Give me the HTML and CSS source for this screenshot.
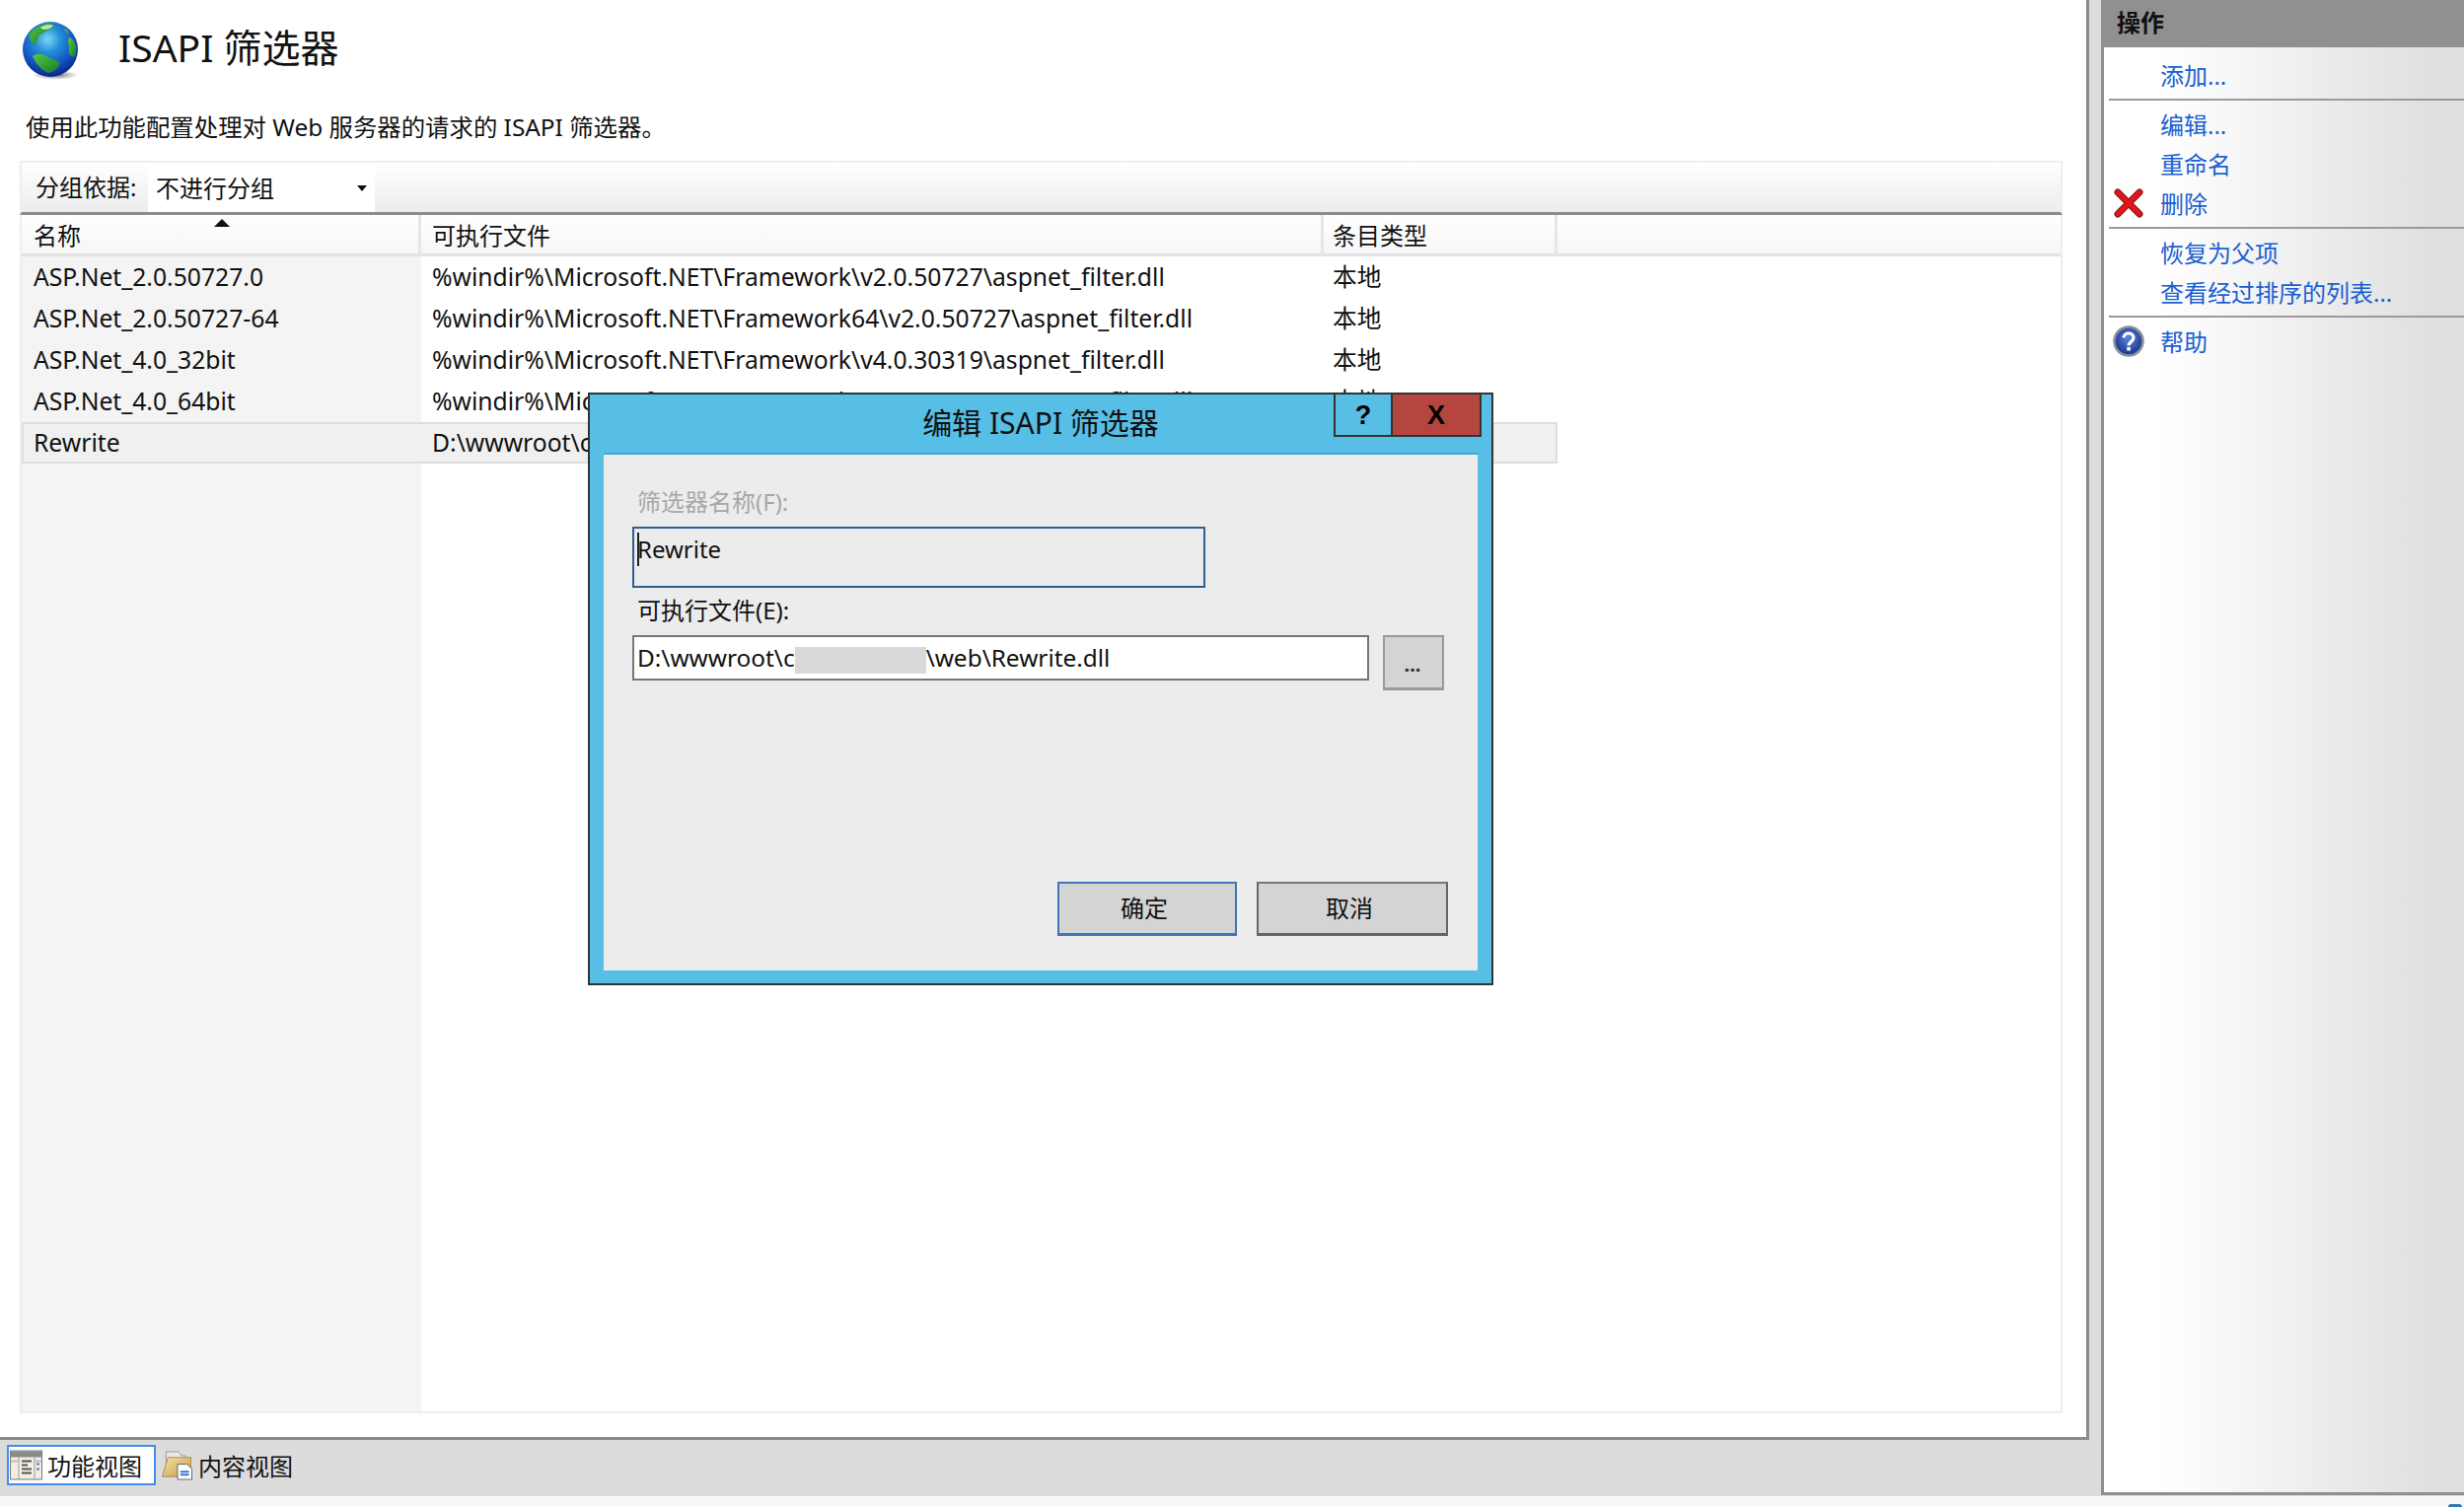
FILE: index.html
```html
<!DOCTYPE html>
<html lang="zh-CN">
<head>
<meta charset="utf-8">
<title>ISAPI 筛选器</title>
<link rel="stylesheet" href="styles.css">
</head>
<body>
<div class="app">
  <div class="top">
    <div class="left">
      <main class="main">
        <header class="title-row">
          <svg class="globe" viewBox="0 0 60 60" aria-hidden="true">
            <defs>
              <radialGradient id="sea" cx="0.45" cy="0.32" r="0.66">
                <stop offset="0" stop-color="#7fd6f4"/>
                <stop offset="0.35" stop-color="#2490da"/>
                <stop offset="0.75" stop-color="#1450c0"/>
                <stop offset="1" stop-color="#0a2a90"/>
              </radialGradient>
              <radialGradient id="shadow" cx="0.5" cy="0.5" r="0.5">
                <stop offset="0" stop-color="#444" stop-opacity="0.9"/>
                <stop offset="1" stop-color="#888" stop-opacity="0"/>
              </radialGradient>
              <linearGradient id="land" x1="0" y1="0" x2="1" y2="1">
                <stop offset="0" stop-color="#5cc840"/>
                <stop offset="1" stop-color="#0f7a2c"/>
              </linearGradient>
            </defs>
            <ellipse cx="34" cy="55" rx="24" ry="5" fill="url(#shadow)"/>
            <circle cx="29" cy="29" r="28" fill="url(#sea)"/>
            <path d="M7 15C12 7 21 3 31 2c-1 3 2 3 0 6-4 0-6 3-9 4-1 3-4 1-5 4-1 4-2 6-3 9-3-2-6-6-7-10z" fill="url(#land)"/>
            <path d="M11 36c4-3 10-3 14 0 5 3 12 4 14 7-2 5-6 9-12 10-7-3-13-10-16-17z" fill="url(#land)"/>
            <path d="M48 17c3 0 5 4 7 8 1 5 0 10-2 12-4-1-6-4-5-9 0-4-2-7 0-11z" fill="url(#land)"/>
            <path d="M43 8c2 0 4 2 5 5-2 0-4-2-5-5z" fill="#49b23d"/>
            <path d="M19 7c4-3 10-4 13-2-2 3-9 6-13 2z" fill="#d8efc4" opacity="0.85"/>
          </svg>
          <h1 class="title">ISAPI 筛选器</h1>
        </header>
        <p class="desc">使用此功能配置处理对 Web 服务器的请求的 ISAPI 筛选器。</p>
        <div class="toolbar">
          <span class="group-label">分组依据:</span>
          <div class="combo"><span>不进行分组</span><i class="combo-caret"></i></div>
        </div>
        <div class="list">
          <div class="row head">
            <div class="cell name">名称<i class="sort"></i></div>
            <div class="cell exe">可执行文件</div>
            <div class="cell type">条目类型</div>
          </div>
          <div class="rows">
            <div class="row"><div class="cell name">ASP.Net_2.0.50727.0</div><div class="cell exe">%windir%\Microsoft.NET\Framework\v2.0.50727\aspnet_filter.dll</div><div class="cell type">本地</div></div>
            <div class="row"><div class="cell name">ASP.Net_2.0.50727-64</div><div class="cell exe">%windir%\Microsoft.NET\Framework64\v2.0.50727\aspnet_filter.dll</div><div class="cell type">本地</div></div>
            <div class="row"><div class="cell name">ASP.Net_4.0_32bit</div><div class="cell exe">%windir%\Microsoft.NET\Framework\v4.0.30319\aspnet_filter.dll</div><div class="cell type">本地</div></div>
            <div class="row"><div class="cell name">ASP.Net_4.0_64bit</div><div class="cell exe">%windir%\Microsoft.NET\Framework64\v4.0.30319\aspnet_filter.dll</div><div class="cell type">本地</div></div>
            <div class="row selected"><div class="cell name">Rewrite</div><div class="cell exe">D:\wwwroot\c</div><div class="cell type"></div></div>
          </div>
        </div>
      </main>
      <nav class="viewbar">
        <div class="view active">
          <svg class="view-icon" viewBox="0 0 33 30" aria-hidden="true">
            <rect x="0.500" y="0.500" width="32" height="29" fill="#f2efe2" stroke="#777"/>
            <rect x="1" y="1" width="31" height="6" fill="#8a8a8a"/>
            <path d="M9 7v22M25 7v22" stroke="#999"/>
            <path d="M1 11h8M25 11h7" stroke="#bbb" stroke-width="2"/>
            <path d="M12 11h10M12 15h6M12 19h10M12 23h10" stroke="#555" stroke-width="2"/>
            <path d="M27 14h3M27 19h3" stroke="#4a80c8" stroke-width="2"/>
          </svg>
          <span>功能视图</span>
        </div>
        <div class="view">
          <svg class="view-icon" viewBox="0 0 33 32" aria-hidden="true">
            <defs>
              <linearGradient id="fold" x1="0" y1="0" x2="1" y2="1">
                <stop offset="0" stop-color="#f6e2a8"/>
                <stop offset="1" stop-color="#c49a4c"/>
              </linearGradient>
            </defs>
            <path d="M5 2h13l3 4h4v8H5z" fill="#e8e8e8" stroke="#999"/>
            <path d="M7 8h24v20H1z" fill="url(#fold)" stroke="#a98a45"/>
            <path d="M17 15h10l5 5v11H17z" fill="#fff" stroke="#666"/>
            <path d="M20 23h9M20 26h9" stroke="#3a78c8" stroke-width="2"/>
          </svg>
          <span>内容视图</span>
        </div>
      </nav>
    </div>
    <aside class="actions">
      <h2 class="actions-head">操作</h2>
      <div class="act-group first">
        <a class="act"><span class="act-icon"></span>添加...</a>
      </div>
      <div class="act-group">
        <a class="act"><span class="act-icon"></span>编辑...</a>
        <a class="act"><span class="act-icon"></span>重命名</a>
        <a class="act"><span class="act-icon">
          <svg class="act-svg" viewBox="0 0 32 32" aria-hidden="true">
            <path d="M5 5 L27 27 M27 5 L5 27" stroke="#8c1c1c" stroke-width="7" stroke-linecap="round"/>
            <path d="M5 5 L27 27 M27 5 L5 27" stroke="#e8141c" stroke-width="4.500" stroke-linecap="round"/>
          </svg>
        </span>删除</a>
      </div>
      <div class="act-group">
        <a class="act"><span class="act-icon"></span>恢复为父项</a>
        <a class="act"><span class="act-icon"></span>查看经过排序的列表...</a>
      </div>
      <div class="act-group">
        <a class="act"><span class="act-icon">
          <svg class="act-svg" viewBox="0 0 32 32" aria-hidden="true">
            <defs>
              <radialGradient id="helpb" cx="0.5" cy="0.4" r="0.6">
                <stop offset="0" stop-color="#5a86d8"/>
                <stop offset="1" stop-color="#14308c"/>
              </radialGradient>
            </defs>
            <circle cx="16" cy="16" r="14.500" fill="url(#helpb)" stroke="#8a8f9a" stroke-width="2.500"/>
            <path d="M11 12.500c0-6 10-6 10 0 0 4-5 4-5 8" fill="none" stroke="#fff" stroke-width="3.200"/>
            <rect x="14.300" y="22" width="3.500" height="3.500" fill="#fff"/>
          </svg>
        </span>帮助</a>
      </div>
    </aside>
  </div>
  <div class="strip"><i class="corner"></i></div>

  <section class="dialog">
    <div class="dlg-title">
      <span>编辑 ISAPI 筛选器</span>
      <div class="dlg-btns">
        <button class="dlg-help">?</button>
        <button class="dlg-close">X</button>
      </div>
    </div>
    <div class="dlg-panel">
      <label class="dlg-label muted">筛选器名称(F):</label>
      <div class="field-name"><i class="caret"></i>Rewrite</div>
      <label class="dlg-label">可执行文件(E):</label>
      <div class="path-row">
        <div class="field-path">D:\wwwroot\c<span class="blur"></span>\web\Rewrite.dll</div>
        <button class="browse">...</button>
      </div>
      <div class="dlg-actions">
        <button class="btn default">确定</button>
        <button class="btn">取消</button>
      </div>
    </div>
  </section>
</div>
</body>
</html>
```

FILE: styles.css
```css
* { box-sizing: border-box; }
html, body { margin: 0; padding: 0; }
body {
  width: 2498px;
  height: 1528px;
  overflow: hidden;
  background: #fff;
  color: #111;
  font-family: "Noto Sans", "Noto Sans CJK SC", sans-serif;
  font-size: 24px;
}
.app { position: relative; width: 2498px; height: 1528px; display: flex; flex-direction: column; }
.top { display: flex; height: 1517px; background: #dcdcdc; }
.left { width: 2130px; display: flex; flex-direction: column; }

/* main pane */
.main {
  width: 2118px;
  height: 1460px;
  background: #fff;
  border-right: 3px solid #8a8a8a;
  border-bottom: 3px solid #8a8a8a;
  padding: 0 24px 0 20px;
  display: flex;
  flex-direction: column;
}
.title-row { height: 96px; display: flex; align-items: center; }
.globe { width: 60px; height: 60px; margin: 6px 0 0 2px; flex: none; }
.title { margin: 0 0 0 38px; font-size: 39px; font-weight: 400; line-height: 48px; }
.desc { margin: 17px 0 0 6px; line-height: 32px; height: 50px; font-size: 24.4px; }
.toolbar {
  height: 55px;
  display: flex;
  align-items: flex-end;
  border-top: 2px solid #eee;
  border-left: 2px solid #eee;
  border-right: 2px solid #eee;
  border-bottom: 3px solid #8c8c8c;
  background: linear-gradient(#fff, #ececec);
  padding-left: 14px;
}
.group-label { line-height: 48px; width: 114px; align-self: center; }
.combo {
  width: 230px;
  height: 48px;
  background: #fff;
  padding-left: 8px;
  line-height: 48px;
  display: flex;
  justify-content: space-between;
  align-items: center;
}
.combo-caret {
  width: 0; height: 0;
  margin-right: 8px;
  border-left: 5px solid transparent;
  border-right: 5px solid transparent;
  border-top: 6px solid #111;
}
.list {
  flex: 1;
  margin-bottom: 24px;
  border: 2px solid #eee;
  border-top: 0;
  display: flex;
  flex-direction: column;
}
.row { display: grid; grid-template-columns: 405px 915px 237px; height: 42px; font-size: 24.7px; }
.row .cell { padding-left: 12px; line-height: 41px; white-space: nowrap; overflow: hidden; }
.row .exe { padding-left: 11px; }
.row .type { padding-left: 9px; }
.head { height: 42px; border-bottom: 3px solid #e2e2e2; background: linear-gradient(#fff, #f6f6f6); font-size: 24px; }
.head .cell { position: relative; border-right: 3px solid #e6e6e6; }
.sort {
  position: absolute;
  left: 195px; top: 4px;
  width: 0; height: 0;
  border-left: 8px solid transparent;
  border-right: 8px solid transparent;
  border-bottom: 8px solid #111;
}
.rows {
  flex: 1;
  background: linear-gradient(#f4f4f4, #f4f4f4) no-repeat 0 0 / 405px 100%;
}
.row.selected {
  background: #f0f0f0;
  width: 1557px;
  height: 42px;
  border: 2px solid #ddd;
}
.selected .cell { line-height: 38px; }
.row.selected .name { padding-left: 10px; }
.row.selected .exe { padding-left: 9px; }

/* view bar */
.viewbar { height: 57px; display: flex; align-items: center; padding: 0 0 7px 7px; gap: 0; }
.view { display: flex; align-items: center; height: 41px; padding: 0 13px 0 3px; gap: 5px; border: 2px solid transparent; }
.view.active { width: 151px; border-color: #3d8ef0; background: #fff; padding: 0 0 0 1px; }
.view-icon { width: 33px; height: 31px; flex: none; }

/* actions */
.actions {
  width: 368px;
  height: 1516px;
  border-left: 3px solid #8f8f8f;
  border-bottom: 3px solid #8f8f8f;
  background: linear-gradient(90deg, #fff 15%, #e0e0e0 90%);
}
.actions-head {
  margin: 0;
  height: 48px;
  background: #909090;
  color: #111;
  font-size: 24px;
  font-weight: 700;
  line-height: 46px;
  padding-left: 13px;
}
.act-group { padding: 5px 0 3px; border-top: 2px solid #9a9a9a; margin-left: 5px; }
.act-group.first { border-top: 0; padding-top: 9px; }
.act {
  display: flex;
  align-items: center;
  height: 40px;
  padding-bottom: 3px;
  color: #1a60d2;
  margin-left: -5px;
}
.act-icon { width: 32px; height: 32px; margin: 0 16px 0 9px; flex: none; }
.act-svg { width: 32px; height: 32px; display: block; }

.strip { flex: 1; background: #f8f8f8; position: relative; }
.corner {
  position: absolute;
  right: 2px; bottom: 0;
  width: 14px; height: 3px;
  border-radius: 7px 7px 0 0;
  background: #2f79b8;
}

/* dialog */
.dialog {
  position: absolute;
  left: 596px;
  top: 398px;
  width: 918px;
  height: 601px;
  border: 2px solid #333;
  background: #57bee6;
  display: flex;
  flex-direction: column;
}
.dlg-title {
  position: relative;
  height: 59px;
  flex: none;
  text-align: center;
  font-size: 30px;
  line-height: 58px;
  color: #111;
}
.dlg-btns { position: absolute; top: 0; right: 10px; display: flex; }
.dlg-btns button {
  height: 43px;
  padding: 0;
  border: 2px solid #333;
  border-top: 0;
  font-family: "Liberation Sans", sans-serif;
  font-weight: 700;
  font-size: 27px;
  line-height: 36px;
  color: #000;
}
.dlg-help { width: 58px; background: #57bee6; border-right: 0 !important; }
.dlg-close { width: 92px; background: #b4453f; }
.dlg-panel {
  flex: 1;
  margin: 0 14px 13px 14px;
  background: #ececec;
  border-top: 2px solid #4aa3cc;
  padding: 35px 30px 35px 29px;
  display: flex;
  flex-direction: column;
}
.dlg-label { line-height: 26px; height: 26px; display: block; padding-left: 5px; }
.muted { color: #a8a8a8; }
.field-name {
  position: relative;
  width: 581px;
  height: 62px;
  margin: 12px 0 10px;
  border: 2px solid #2f5f8f;
  background: #ececec;
  padding-left: 3px;
  line-height: 42px;
}
.caret { position: absolute; left: 3px; top: 4px; width: 2px; height: 34px; background: #222; }
.path-row { display: flex; gap: 14px; margin-top: 12px; align-items: flex-start; }
.field-path {
  position: relative;
  width: 747px;
  height: 46px;
  border: 2px solid #777;
  background: #fff;
  padding-left: 3px;
  line-height: 42px;
  font-size: 24.4px;
  white-space: nowrap;
  display: flex;
}
.blur { width: 133px; height: 27px; margin-top: 10px; background: #d9d9d9; flex: none; }
.browse {
  width: 62px;
  height: 56px;
  padding: 0 2px 0 0;
  background: #d4d4d4;
  border: 2px solid #999;
  border-bottom-width: 3px;
  font: 700 20px/56px "Noto Sans", sans-serif;
  color: #333;
}
.dlg-actions { margin-top: auto; display: flex; justify-content: flex-end; gap: 20px; }
.btn {
  width: 194px;
  height: 55px;
  padding: 0 6px 0 0;
  background: #d4d4d4;
  border: 2px solid #666;
  border-top-color: #777;
  border-bottom-width: 3px;
  font: 400 24px/48px "Noto Sans", "Noto Sans CJK SC", sans-serif;
  color: #111;
}
.btn.default { width: 182px; border-color: #3c78b5; }
```
